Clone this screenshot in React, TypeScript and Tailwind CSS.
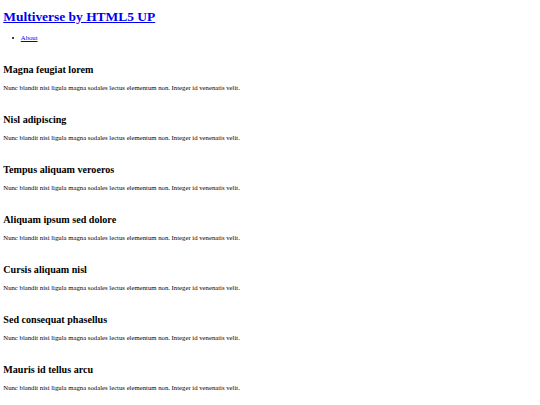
import React from "react";

/* Unstyled page shown scaled down: sizes are roughly the browser defaults x 0.42 */

const articles = [
  "Magna feugiat lorem",
  "Nisl adipiscing",
  "Tempus aliquam veroeros",
  "Aliquam ipsum sed dolore",
  "Cursis aliquam nisl",
  "Sed consequat phasellus",
  "Mauris id tellus arcu",
];

const body =
  "Nunc blandit nisi ligula magna sodales lectus elementum non. Integer id venenatis velit.";

export default function App() {
  return (
    <div className="min-h-screen bg-white px-[3.3px] pb-[8px] font-['Liberation_Serif',_'Times_New_Roman',_serif] text-black">
      <header>
        <h1 className="mt-[9px] mb-[8.6px] text-[13.45px] leading-[1.149] font-bold">
          <a href="#" className="text-[#0000ee] underline">
            Multiverse by HTML5 UP
          </a>
        </h1>
        <nav>
          <ul className="mt-[9.5px] mb-[1.4px] list-none pl-[9px] text-[6.72px] leading-[1.149]">
            <li className="flex items-center">
              <span className="mr-[6.3px] h-[2.2px] w-[2.2px] rounded-full bg-black" />
              <a href="#" className="text-[#0000ee] underline">
                About
              </a>
            </li>
          </ul>
        </nav>
      </header>

      <div>
        {articles.map((title) => (
          <article key={title} className="mt-[22.7px]">
            <h2 className="mb-[7.97px] text-[10.1px] leading-[1.149] font-bold">{title}</h2>
            <p className="text-[6.72px] leading-[1.149]">{body}</p>
          </article>
        ))}
      </div>
    </div>
  );
}
